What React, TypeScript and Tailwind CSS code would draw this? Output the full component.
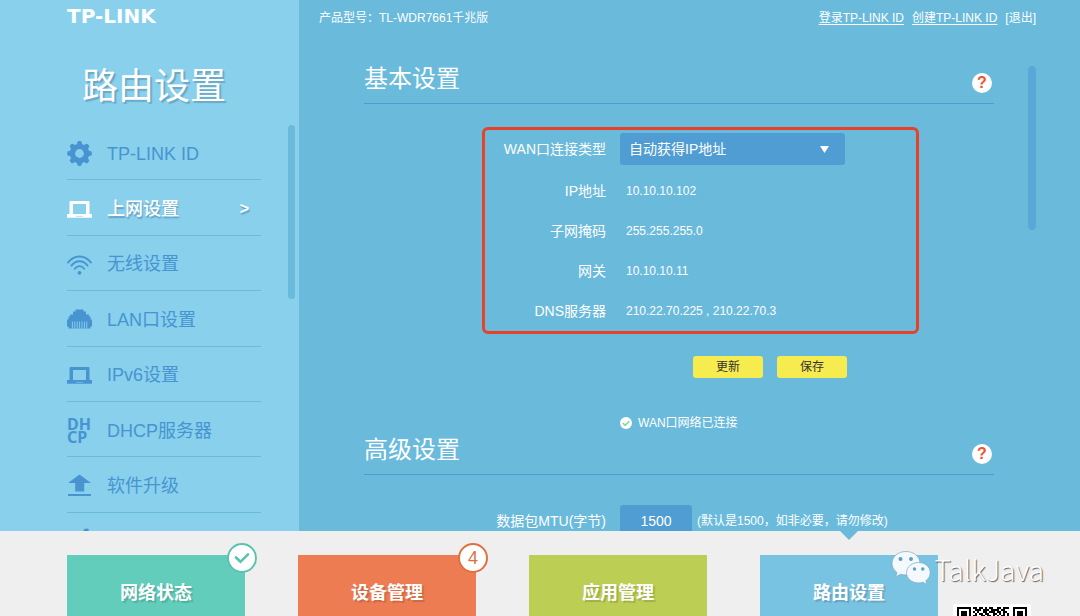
import type { ReactNode } from "react";

/**
 * Router admin page: side menu, WAN settings form and the bottom app tiles.
 */

function GearIcon() {
  return (
    <svg width="25" height="25" viewBox="-12.5 -12.5 25 25" aria-hidden="true">
      <circle r="7.1" fill="none" stroke="currentColor" strokeWidth="5.4" />
      {[0, 45, 90, 135, 180, 225, 270, 315].map((deg) => (
        <rect
          key={deg}
          x="-2.4"
          y="-12.4"
          width="4.8"
          height="5.4"
          rx="1.8"
          fill="currentColor"
          transform={`rotate(${deg})`}
        />
      ))}
    </svg>
  );
}

function LaptopIcon() {
  return (
    <svg width="25" height="25" viewBox="0 0 25 25" aria-hidden="true">
      <path
        fill="currentColor"
        fillRule="evenodd"
        d="M3.500 4h18a1 1 0 0 1 1 1v12H25v3.800H0V17h2.500V5a1 1 0 0 1 1-1zM6 7v10h13V7z"
      />
      <rect x="9" y="18.800" width="7" height="1.200" fill="#88d0ec" opacity="0.5" />
    </svg>
  );
}

function WifiIcon() {
  return (
    <svg width="25" height="25" viewBox="0 0 25 25" aria-hidden="true">
      <g fill="none" stroke="currentColor" strokeWidth="1.9" strokeLinecap="round">
        <path d="M1 10.600C7 2.400 18 2.400 24 10.600" />
        <path d="M4.400 13.600C8.800 7.800 16.200 7.800 20.600 13.600" />
        <path d="M7.800 16.800C10.500 13.200 14.500 13.200 17.200 16.800" />
      </g>
      <circle cx="12.500" cy="20.800" r="1.900" fill="currentColor" />
    </svg>
  );
}

function LanIcon() {
  return (
    <svg width="25" height="25" viewBox="0 0 25 25" aria-hidden="true">
      <path
        fill="currentColor"
        d="M8.500 2.500h8v2H19v3h3v2h1.500v3H25v7h-1.500v2h-22v-2H0v-7h1.500v-3H3v-2h3v-3h2.500z"
      />
      <path
        stroke="#88d0ec"
        strokeWidth="0.9"
        d="M5.400 14.500v7M7.800 14.500v7M10.200 14.500v7M12.600 14.500v7M15 14.500v7M17.400 14.500v7M19.800 14.500v7"
      />
    </svg>
  );
}

function DhcpIcon() {
  return (
    <span
      aria-hidden="true"
      className="block w-[25px] font-['Noto_Sans',sans-serif] text-base leading-[13px] font-bold"
    >
      DH
      <br />
      CP
    </span>
  );
}

function UpgradeIcon() {
  return (
    <svg width="25" height="25" viewBox="0 0 25 25" aria-hidden="true">
      <path fill="currentColor" d="M12.500 1.500L24 10h-6.800v8.500H8.200V10H1z" />
      <rect x="1" y="21" width="23" height="2" fill="currentColor" />
    </svg>
  );
}

function ToolIcon() {
  return (
    <svg width="25" height="25" viewBox="0 0 25 25" aria-hidden="true">
      <path fill="currentColor" d="M17 1.500a3 2.500 0 0 1 5 0l-2 4-8 16-4 2 1-5z" />
    </svg>
  );
}

type MenuItem = { label: string; icon: ReactNode; active?: boolean };

const MENU: MenuItem[] = [
  { label: "TP-LINK ID", icon: <GearIcon /> },
  { label: "上网设置", icon: <LaptopIcon />, active: true },
  { label: "无线设置", icon: <WifiIcon /> },
  { label: "LAN口设置", icon: <LanIcon /> },
  { label: "IPv6设置", icon: <LaptopIcon /> },
  { label: "DHCP服务器", icon: <DhcpIcon /> },
  { label: "软件升级", icon: <UpgradeIcon /> },
];

const WAN_INFO = [
  { label: "IP地址", value: "10.10.10.102" },
  { label: "子网掩码", value: "255.255.255.0" },
  { label: "网关", value: "10.10.10.11" },
  { label: "DNS服务器", value: "210.22.70.225 , 210.22.70.3" },
];

function Sidebar() {
  return (
    <aside className="flex w-[299px] shrink-0 flex-col bg-[#88d0ec] pl-[67px]">
      <div className="pt-1 font-['DejaVu_Sans',sans-serif] text-[20px] leading-6 font-bold text-white">
        TP-LINK
      </div>
      <h1 className="mt-[35px] w-[194px] pr-5 text-center text-[36px] leading-[48px] text-white [text-shadow:2px_2px_1px_rgba(70,120,150,0.45)]">
        <span className="whitespace-nowrap">路由设置</span>
      </h1>
      <div className="mt-[14px] flex min-h-0 flex-1 justify-between overflow-hidden pr-1">
        <ul className="grid h-[443px] w-[194px] shrink-0 auto-rows-fr">
          {MENU.map((item) => (
            <li key={item.label} className="border-b border-[#6abadc]">
              <a
                href="#"
                className={
                  item.active
                    ? "flex h-full items-center gap-[15px] pt-[3px] text-lg text-white [text-shadow:1px_2px_1px_rgba(70,120,150,0.5)]"
                    : "flex h-full items-center gap-[15px] pt-[3px] text-lg text-[#4794d1]"
                }
              >
                {item.icon}
                <span className={item.active ? "font-medium" : ""}>{item.label}</span>
                {item.active && <span className="mr-3 ml-auto text-base font-bold">&gt;</span>}
              </a>
            </li>
          ))}
          <li className="flex items-center text-[#4794d1]">
            <ToolIcon />
          </li>
        </ul>
        <div className="h-[174px] w-[7px] rounded-full bg-[#6abadc]" />
      </div>
    </aside>
  );
}

function SectionTitle({ children }: { children: ReactNode }) {
  return (
    <div className="flex h-[42px] items-center justify-between border-b border-[#4b9bd5]">
      <h2 className="pb-2 text-2xl text-white">{children}</h2>
      <button
        type="button"
        aria-label={`${children}`}
        className="mr-[2px] flex size-5 items-center justify-center rounded-full bg-white text-base leading-5 font-bold text-[#f0532f]"
      >
        ?
      </button>
    </div>
  );
}

function WanForm() {
  return (
    <form>
      <div className="mt-[23px] ml-[118px] w-[437px] rounded-md border-3 border-[#e8412a] pt-[3px]">
        <div className="flex items-center gap-[14px]">
          <label htmlFor="wan-type" className="w-[121px] text-right text-sm">
            WAN口连接类型
          </label>
          <div className="relative">
            <select
              id="wan-type"
              className="h-8 w-[225px] appearance-none rounded-[3px] bg-[#509dd3] pl-[9px] text-sm text-white"
            >
              <option>自动获得IP地址</option>
            </select>
            <svg
              className="pointer-events-none absolute top-[13px] right-4"
              width="9"
              height="7"
              viewBox="0 0 9 7"
              aria-hidden="true"
            >
              <path d="M0 0h9L4.500 7z" fill="#fff" />
            </svg>
          </div>
        </div>
        <dl className="mt-[6px]">
          {WAN_INFO.map((row) => (
            <div key={row.label} className="flex h-10 items-center gap-5">
              <dt className="w-[121px] text-right text-sm">{row.label}</dt>
              <dd className="text-xs">{row.value}</dd>
            </div>
          ))}
        </dl>
      </div>
      <div className="mt-[22px] ml-[329px] flex gap-[14px]">
        <button
          type="button"
          className="h-[22px] w-[70px] rounded-[3px] bg-[#f7ec4f] text-xs text-[#333]"
        >
          更新
        </button>
        <button
          type="submit"
          className="h-[22px] w-[70px] rounded-[3px] bg-[#f7ec4f] text-xs text-[#333]"
        >
          保存
        </button>
      </div>
      <p className="mt-[35px] ml-[256px] flex h-5 items-center gap-[6px] text-xs">
        <svg width="12" height="12" viewBox="0 0 12 12" aria-hidden="true">
          <circle cx="6" cy="6" r="6" fill="#fff" />
          <path d="M2.800 6l2.400 2.300L9.300 4.200" fill="none" stroke="#7edc8c" strokeWidth="1.600" />
        </svg>
        WAN口网络已连接
      </p>
    </form>
  );
}

function Main() {
  return (
    <main className="flex min-w-0 flex-1 flex-col bg-[#6abadc] text-white">
      <header className="flex h-9 shrink-0 items-center justify-between pr-11 pl-5 text-xs">
        <span>产品型号：TL-WDR7661千兆版</span>
        <nav className="flex gap-2">
          <a href="#" className="underline underline-offset-2">
            登录TP-LINK ID
          </a>
          <a href="#" className="underline underline-offset-2">
            创建TP-LINK ID
          </a>
          <a href="#">[退出]</a>
        </nav>
      </header>
      <div className="flex min-h-0 flex-1 gap-[34px] overflow-hidden pr-11 pl-[65px]">
        <div className="min-w-0 flex-1 pt-[26px]">
          <SectionTitle>基本设置</SectionTitle>
          <WanForm />
          <SectionTitle>高级设置</SectionTitle>
          <div className="mt-[30px] flex items-center">
            <label htmlFor="mtu" className="w-[242px] text-right text-sm">
              数据包MTU(字节)
            </label>
            <input
              id="mtu"
              type="text"
              defaultValue="1500"
              className="ml-[14px] h-8 w-[72px] rounded-[3px] bg-[#509dd3] text-center text-sm"
            />
            <span className="ml-[5px] text-xs">(默认是1500，如非必要，请勿修改)</span>
          </div>
        </div>
        <div className="mt-[30px] h-[164px] w-2 shrink-0 rounded-full bg-[#5ba8d8]" />
      </div>
    </main>
  );
}

// top rows of the app download code, one character per module
const QR_ROWS = [
  "11111110110110101100110111.01111111",
  "10000010011101110111101100.01000001",
  "10111010101001101110110110.01011101",
  "10111010010110110011010101.01011101",
  "10111010110011011010101101.01011101",
];

function QrCode() {
  return (
    <svg width="78" height="12" viewBox="0 0 78 12" aria-hidden="true">
      <rect width="78" height="12" fill="#fff" />
      {QR_ROWS.map((row, y) =>
        [...row].map((cell, x) =>
          cell === "1" ? (
            <rect key={`${x}-${y}`} x={4 + x * 2} y={3 + y * 2} width="2" height="2" fill="#000" />
          ) : null,
        ),
      )}
    </svg>
  );
}

function Watermark() {
  return (
    <div className="pointer-events-none absolute top-[18px] right-9 flex items-center gap-1">
      <svg width="40" height="36" viewBox="0 0 40 36" aria-hidden="true">
        <g fill="#f3f9fd" stroke="#7aa9c2" strokeWidth="0.7">
          <path d="M15 1.500C7 1.500 1 6.800 1 13.400c0 3.700 1.900 6.900 5 9.100l-1.300 4.200 5-2.500c1.700.5 3.400.8 5.300.8 8 0 14-5.200 14-11.700S23 1.500 15 1.500z" />
          <path d="M27.500 12.500c-6.700 0-12 4.500-12 10.200s5.300 10.200 12 10.200c1.500 0 3-.2 4.300-.7l4.200 2.200-1.200-3.700c2.800-1.900 4.400-4.700 4.400-8 0-5.700-5-10.200-11.700-10.200z" />
        </g>
        <g fill="#5f9fc0">
          <circle cx="9.500" cy="9" r="2" />
          <circle cx="20" cy="9" r="2" />
          <circle cx="23.500" cy="19" r="1.700" />
          <circle cx="31.800" cy="19" r="1.700" />
        </g>
      </svg>
      <span className="pt-[2px] font-['Noto_Sans_CJK_SC',sans-serif] text-[28px] leading-9 font-light text-white [text-shadow:1px_1px_1px_rgba(0,0,0,0.6)]">
        TalkJava
      </span>
    </div>
  );
}

const TILE =
  "relative flex h-[75px] w-[178px] justify-center pt-[25px] text-lg leading-[27px] font-bold text-white [text-shadow:2px_2px_1px_rgba(0,0,0,0.15)]";
const BADGE =
  "absolute -top-3 -right-3 flex size-[30px] items-center justify-center rounded-full border-2 bg-white text-lg font-normal [text-shadow:none]";

function Footer() {
  return (
    <footer className="relative flex h-[85px] shrink-0 justify-between bg-[#efefef] pr-[49px] pl-[67px]">
      <nav className="flex gap-[53px] pt-6">
        <a href="#" className={`${TILE} bg-[#62cdbb]`}>
          网络状态
          <span className={`${BADGE} border-[#5bc2ad]`}>
            <svg width="16" height="12" viewBox="0 0 16 12" aria-hidden="true">
              <path
                d="M2 5.500l4.500 4.300L14 2.300"
                fill="none"
                stroke="#5bc2ad"
                strokeWidth="2.600"
                strokeLinecap="round"
              />
            </svg>
          </span>
        </a>
        <a href="#" className={`${TILE} bg-[#ee7c52]`}>
          设备管理
          <span className={`${BADGE} border-[#e0703f] text-[#e0703f]`}>4</span>
        </a>
        <a href="#" className={`${TILE} bg-[#bccf54]`}>
          应用管理
        </a>
        <a href="#" className={`${TILE} bg-[#79c3e2]`}>
          <svg
            className="absolute -top-6 left-20"
            width="18"
            height="9"
            viewBox="0 0 18 9"
            aria-hidden="true"
          >
            <path d="M0 0h18L9 9z" fill="#6abadc" />
          </svg>
          路由设置
        </a>
      </nav>
      <div className="self-end">
        <QrCode />
      </div>
      <Watermark />
    </footer>
  );
}

export default function App() {
  return (
    <div className="flex h-screen flex-col overflow-hidden font-['Liberation_Sans','Noto_Sans_CJK_SC',sans-serif]">
      <div className="flex min-h-0 flex-1">
        <Sidebar />
        <Main />
      </div>
      <Footer />
    </div>
  );
}
